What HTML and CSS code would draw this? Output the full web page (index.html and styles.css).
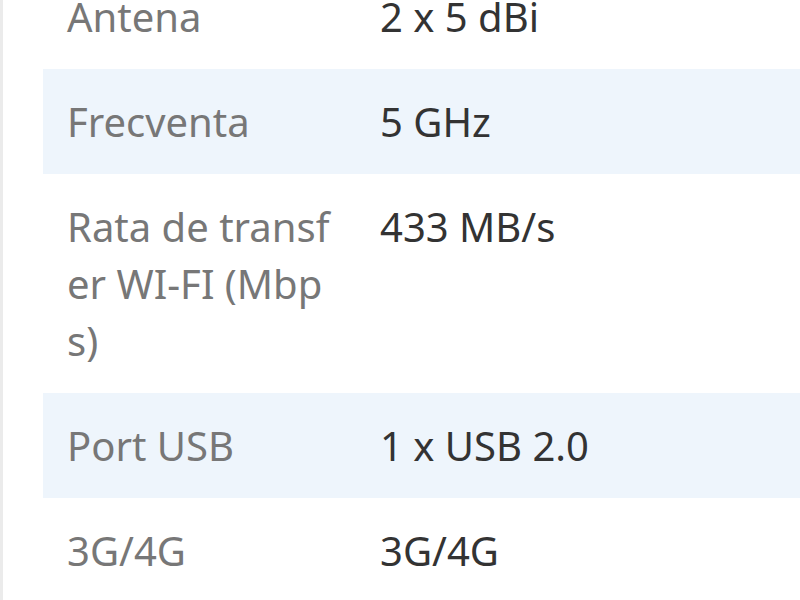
FILE: index.html
```html
<!DOCTYPE html>
<html lang="ro">
  <head>
    <meta charset="UTF-8" />
    <meta name="viewport" content="width=device-width, initial-scale=1.0" />
    <title>Specificatii</title>
    <link rel="stylesheet" href="styles.css">
  </head>
  <body>
    <div class="page">
      <table class="specs">
        <tr>
          <td class="spec-name">Antena</td>
          <td class="spec-value">2 x 5 dBi</td>
        </tr>
        <tr>
          <td class="spec-name">Frecventa</td>
          <td class="spec-value">5 GHz</td>
        </tr>
        <tr>
          <td class="spec-name">Rata de transfer WI-FI (Mbps)</td>
          <td class="spec-value">433 MB/s</td>
        </tr>
        <tr>
          <td class="spec-name">Port USB</td>
          <td class="spec-value">1 x USB 2.0</td>
        </tr>
        <tr>
          <td class="spec-name">3G/4G</td>
          <td class="spec-value">3G/4G</td>
        </tr>
      </table>
    </div>
  </body>
</html>
```

FILE: styles.css
```css
html,
body {
  margin: 0;
  background-color: #fff;
  overflow: hidden;
}
body {
  font-family: "Noto Sans", "Open Sans", sans-serif;
}
.page {
  border-left: 3px solid #ebebeb;
  padding-left: 40px;
  min-height: 680px;
  margin-top: -36px;
}
.specs {
  width: 100%;
  border-collapse: collapse;
  font-size: 40px;
  line-height: 57px;
}
.specs td {
  padding: 24px 24px;
  vertical-align: top;
}
.specs tr:nth-child(even) {
  background-color: #eef5fc;
}
.spec-name {
  width: 265px;
  color: #777;
  word-break: break-all;
}
.spec-value {
  color: #333;
}
```
